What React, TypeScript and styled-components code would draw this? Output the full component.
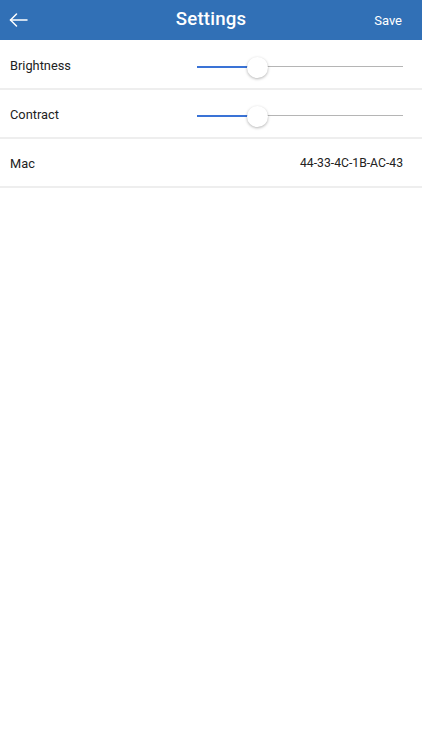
import React from "react";
import styled, { createGlobalStyle } from "styled-components";

const Global = createGlobalStyle`
  html, body { margin: 0; padding: 0; background: #fff; }
  body { font-family: Roboto, "Noto Sans", Arial, sans-serif; }
  * { box-sizing: border-box; }
`;

const Page = styled.div`
  width: 422px;
  min-height: 750px;
  background: #fff;
`;

const Header = styled.header`
  height: 40px;
  background: #3170b6;
  display: grid;
  grid-template-columns: 60px 1fr 60px;
  align-items: center;
  color: #fff;
`;

const BackButton = styled.button`
  background: none;
  border: none;
  padding: 0 0 0 9px;
  height: 40px;
  display: flex;
  align-items: center;
  cursor: pointer;
`;

const Title = styled.h1`
  margin: 0;
  text-align: center;
  font-size: 18.6px;
  font-weight: 500;
  letter-spacing: 0.2px;
  padding-bottom: 2px;
`;

const SaveButton = styled.button`
  background: none;
  border: none;
  color: #fff;
  font-family: inherit;
  font-size: 13px;
  padding: 0 20px 0 0;
  text-align: right;
  height: 40px;
  cursor: pointer;
`;

const List = styled.div`
  padding-top: 1px;
`;

const Row = styled.div`
  height: 49px;
  display: flex;
  align-items: center;
  justify-content: space-between;
  padding: 1px 19px 0 10px;
  border-bottom: 2px solid #eeeeee;
`;

const Label = styled.span`
  font-size: 12.8px;
  color: #222;
`;

const Value = styled.span`
  font-size: 12.2px;
  color: #222;
`;

const Slider = styled.div`
  position: relative;
  width: 206px;
  height: 22px;
  margin-top: 3px;
  display: flex;
  align-items: center;
`;

const Track = styled.div`
  width: 100%;
  height: 1px;
  background: #b5b5b5;
`;

const Fill = styled.div`
  position: absolute;
  left: 0;
  top: 10px;
  height: 2px;
  background: #3a73d6;
`;

const Thumb = styled.div`
  position: absolute;
  top: 1px;
  width: 21px;
  height: 21px;
  margin-left: -10px;
  border-radius: 50%;
  background: #fff;
  box-shadow: 0 1px 3px rgba(0, 0, 0, 0.3);
`;

const RangeSlider: React.FC<{ value: number }> = ({ value }) => (
  <Slider>
    <Track />
    <Fill style={{ width: `${value}%` }} />
    <Thumb style={{ left: `${value}%` }} />
  </Slider>
);

export default function App() {
  return (
    <Page>
      <Global />
      <Header>
        <BackButton aria-label="back">
          <svg width="19" height="14" viewBox="0 0 19 14" fill="none" stroke="#fff" strokeWidth="1.5" strokeLinecap="round" strokeLinejoin="round">
            <path d="M18 7H1.5" />
            <path d="M7.5 1L1.5 7l6 6" />
          </svg>
        </BackButton>
        <Title>Settings</Title>
        <SaveButton>Save</SaveButton>
      </Header>
      <List>
        <Row>
          <Label>Brightness</Label>
          <RangeSlider value={29} />
        </Row>
        <Row>
          <Label>Contract</Label>
          <RangeSlider value={29} />
        </Row>
        <Row>
          <Label>Mac</Label>
          <Value>44-33-4C-1B-AC-43</Value>
        </Row>
      </List>
    </Page>
  );
}
